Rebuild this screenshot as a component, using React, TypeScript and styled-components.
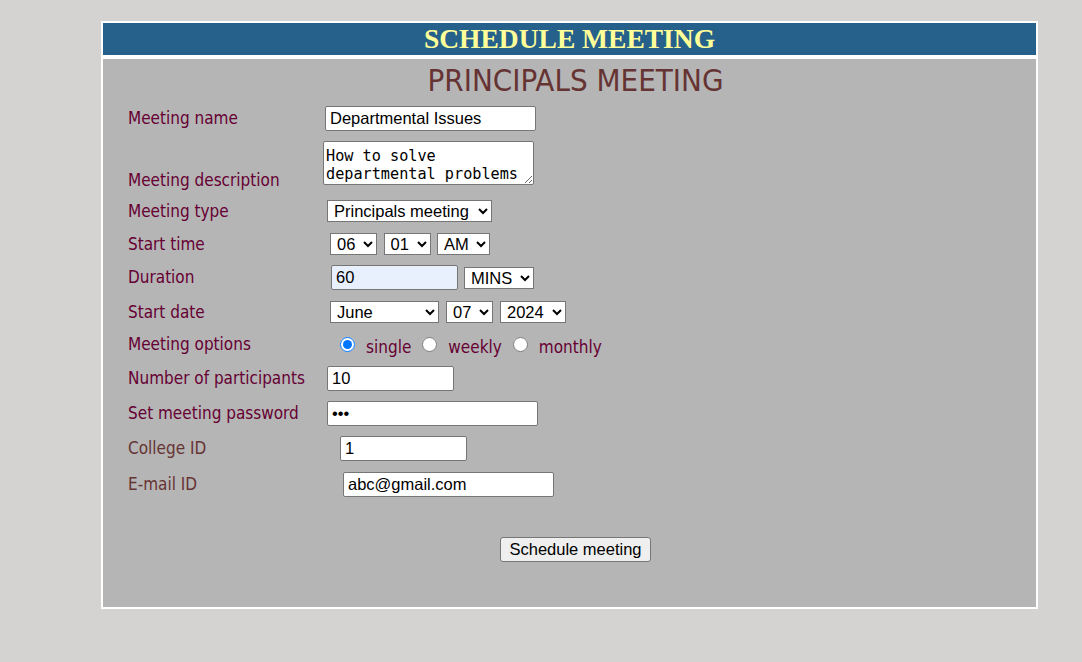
import React from "react";
import styled, { createGlobalStyle } from "styled-components";

const Global = createGlobalStyle`
  html, body { margin: 0; padding: 0; }
  body {
    background: #d4d3d1;
    font-family: "DejaVu Sans Condensed", "DejaVu Sans", sans-serif;
  }
`;

const Page = styled.div`
  padding: 21px 0 40px 101px;
`;

const Frame = styled.div`
  width: 933px;
  border: 2px solid #ffffff;
  background: #ffffff;
  display: flex;
  flex-direction: column;
  gap: 4px;
`;

const Banner = styled.h1`
  margin: 0;
  height: 32px;
  background: #25618b;
  color: #ffff99;
  font-family: "Liberation Serif", "Times New Roman", serif;
  font-weight: bold;
  font-size: 27.5px;
  line-height: 32px;
  text-align: center;
`;

const Body = styled.div`
  background: #b5b5b5;
  padding: 0 0 45px 12px;
  display: flex;
  flex-direction: column;
`;

const Title = styled.h2`
  margin: 0;
  height: 42px;
  line-height: 42px;
  text-align: center;
  font-weight: normal;
  font-size: 31px;
  color: #663333;
  font-family: "DejaVu Sans Condensed", "DejaVu Sans", sans-serif;
`;

const Form = styled.form`
  display: flex;
  flex-direction: column;
`;

const Row = styled.div<{ $h: number }>`
  display: grid;
  grid-template-columns: 195px 1fr;
  align-items: center;
  height: ${(p) => p.$h}px;
  padding-left: 13px;
`;

const Label = styled.label<{ $brown?: boolean; $bottom?: boolean }>`
  font-size: 17px;
  line-height: 20px;
  color: ${(p) => (p.$brown ? "#663333" : "#660033")};
  align-self: ${(p) => (p.$bottom ? "end" : "center")};
  margin-top: -1px;
`;

const Controls = styled.div<{ $indent: number; $gap?: number }>`
  display: flex;
  align-items: center;
  gap: ${(p) => p.$gap ?? 6}px;
  margin-left: ${(p) => p.$indent}px;
`;

const TextInput = styled.input<{ $w: number; $fill?: boolean }>`
  box-sizing: border-box;
  width: ${(p) => p.$w}px;
  height: 25px;
  margin: 0;
  padding: 0 4px;
  border: 1px solid #767676;
  border-radius: 2px;
  background: ${(p) => (p.$fill ? "#e8f0fe" : "#ffffff")};
  font-family: "Liberation Sans", Arial, sans-serif;
  font-size: 16.5px;
  color: #000;
  outline: none;
`;

const TextArea = styled.textarea`
  box-sizing: border-box;
  width: 211px;
  height: 44px;
  margin: 0;
  padding: 5px 2px 0 2px;
  border: 1px solid #767676;
  border-radius: 2px;
  background: #fff;
  font-family: "DejaVu Sans Mono", "Liberation Mono", monospace;
  font-size: 15.2px;
  line-height: 18px;
  color: #000;
  overflow: hidden;
`;

const Select = styled.select<{ $w: number }>`
  box-sizing: border-box;
  width: ${(p) => p.$w}px;
  height: 22px;
  margin: 0;
  padding: 0 0 0 2px;
  border: 1px solid #767676;
  border-radius: 0;
  background-color: #fff;
  font-family: "Liberation Sans", Arial, sans-serif;
  font-size: 16.5px;
  color: #000;
`;

const Options = styled.div`
  display: flex;
  align-items: center;
  gap: 11px;
`;

const Option = styled.label`
  display: flex;
  align-items: center;
  gap: 11px;
  font-size: 17px;
  line-height: 20px;
  color: #660033;
  margin-top: 4px;
`;

const Radio = styled.input`
  width: 15px;
  height: 15px;
  margin: -5px 0 0 0;
`;

const Footer = styled.div`
  display: flex;
  justify-content: center;
  padding-top: 31px;
`;

const Button = styled.button`
  box-sizing: border-box;
  width: 151px;
  height: 25px;
  padding: 0;
  border: 1px solid #767676;
  border-radius: 3px;
  background: #efefef;
  font-family: "Liberation Sans", Arial, sans-serif;
  font-size: 16.5px;
  color: #000;
`;

const months = [
  "January", "February", "March", "April", "May", "June",
  "July", "August", "September", "October", "November", "December",
];

const pad = (n: number) => String(n).padStart(2, "0");

export default function App() {
  return (
    <>
      <Global />
      <Page>
        <Frame>
          <Banner>SCHEDULE MEETING</Banner>
          <Body>
            <Title>PRINCIPALS MEETING</Title>
            <Form onSubmit={(e) => e.preventDefault()}>
              <Row $h={35}>
                <Label>Meeting name</Label>
                <Controls $indent={2}>
                  <TextInput $w={211} defaultValue="Departmental Issues" />
                </Controls>
              </Row>
              <Row $h={54}>
                <Label $bottom>Meeting description</Label>
                <Controls $indent={0}>
                  <TextArea defaultValue={"How to solve departmental problems"} />
                </Controls>
              </Row>
              <Row $h={42}>
                <Label>Meeting type</Label>
                <Controls $indent={4}>
                  <Select $w={165} defaultValue="Principals meeting">
                    <option>Principals meeting</option>
                    <option>Staff meeting</option>
                  </Select>
                </Controls>
              </Row>
              <Row $h={24}>
                <Label>Start time</Label>
                <Controls $indent={7} $gap={6.5}>
                  <Select $w={47} defaultValue="06">
                    {Array.from({ length: 12 }, (_, i) => pad(i + 1)).map((v) => (
                      <option key={v}>{v}</option>
                    ))}
                  </Select>
                  <Select $w={47} defaultValue="01">
                    {Array.from({ length: 60 }, (_, i) => pad(i)).map((v) => (
                      <option key={v}>{v}</option>
                    ))}
                  </Select>
                  <Select $w={53} defaultValue="AM">
                    <option>AM</option>
                    <option>PM</option>
                  </Select>
                </Controls>
              </Row>
              <Row $h={43}>
                <Label>Duration</Label>
                <Controls $indent={8}>
                  <TextInput $w={127} $fill defaultValue="60" />
                  <Select $w={70} defaultValue="MINS">
                    <option>MINS</option>
                    <option>HRS</option>
                  </Select>
                </Controls>
              </Row>
              <Row $h={26}>
                <Label>Start date</Label>
                <Controls $indent={7} $gap={7}>
                  <Select $w={109} defaultValue="June">
                    {months.map((m) => (
                      <option key={m}>{m}</option>
                    ))}
                  </Select>
                  <Select $w={47} defaultValue="07">
                    {Array.from({ length: 31 }, (_, i) => pad(i + 1)).map((v) => (
                      <option key={v}>{v}</option>
                    ))}
                  </Select>
                  <Select $w={66} defaultValue="2024">
                    <option>2024</option>
                    <option>2025</option>
                  </Select>
                </Controls>
              </Row>
              <Row $h={39}>
                <Label>Meeting options</Label>
                <Controls $indent={17}>
                  <Options>
                    <Option>
                      <Radio type="radio" name="opt" defaultChecked />
                      single
                    </Option>
                    <Option>
                      <Radio type="radio" name="opt" />
                      weekly
                    </Option>
                    <Option>
                      <Radio type="radio" name="opt" />
                      monthly
                    </Option>
                  </Options>
                </Controls>
              </Row>
              <Row $h={28}>
                <Label>Number of participants</Label>
                <Controls $indent={4}>
                  <TextInput $w={127} defaultValue="10" />
                </Controls>
              </Row>
              <Row $h={43}>
                <Label>Set meeting password</Label>
                <Controls $indent={4}>
                  <TextInput $w={211} type="password" defaultValue="abc" />
                </Controls>
              </Row>
              <Row $h={27}>
                <Label $brown>College ID</Label>
                <Controls $indent={17}>
                  <TextInput $w={127} defaultValue="1" />
                </Controls>
              </Row>
              <Row $h={44}>
                <Label $brown>E-mail ID</Label>
                <Controls $indent={20}>
                  <TextInput $w={211} defaultValue="abc@gmail.com" />
                </Controls>
              </Row>
              <Footer>
                <Button type="submit">Schedule meeting</Button>
              </Footer>
            </Form>
          </Body>
        </Frame>
      </Page>
    </>
  );
}
